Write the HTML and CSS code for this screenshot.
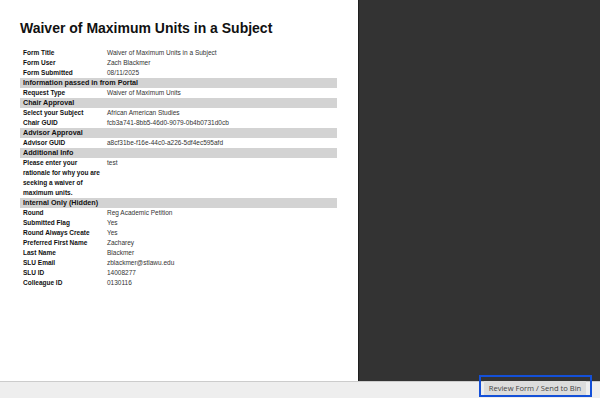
FILE: index.html
```html
<!DOCTYPE html>
<html lang="en">
<head>
  <meta charset="UTF-8" />
  <meta name="viewport" content="width=device-width, initial-scale=1.0"/>
  <title>Waiver of Maximum Units in a Subject</title>
  <link rel="stylesheet" href="styles.css">
</head>
<body>

  <div class="workspace">
    <div class="form-panel">
      <h1>Waiver of Maximum Units in a Subject</h1>

      <table class="form-data">
        <tr><td class="label">Form Title</td><td>Waiver of Maximum Units in a Subject</td></tr>
        <tr><td class="label">Form User</td><td>Zach Blackmer</td></tr>
        <tr><td class="label">Form Submitted</td><td>08/11/2025</td></tr>

        <tr class="section"><td colspan="2">Information passed in from Portal</td></tr>
        <tr><td class="label">Request Type</td><td>Waiver of Maximum Units</td></tr>

        <tr class="section"><td colspan="2">Chair Approval</td></tr>
        <tr><td class="label">Select your Subject</td><td>African American Studies</td></tr>
        <tr><td class="label">Chair GUID</td><td>fcb3a741-8bb5-46d0-9079-0b4b0731d0cb</td></tr>

        <tr class="section"><td colspan="2">Advisor Approval</td></tr>
        <tr><td class="label">Advisor GUID</td><td>a8cf31be-f16e-44c0-a226-5df4ec595afd</td></tr>

        <tr class="section"><td colspan="2">Additional Info</td></tr>
        <tr><td class="label">Please enter your rationale for why you are seeking a waiver of maximum units.</td><td>test</td></tr>

        <tr class="section"><td colspan="2">Internal Only (Hidden)</td></tr>
        <tr><td class="label">Round</td><td>Reg Academic Petition</td></tr>
        <tr><td class="label">Submitted Flag</td><td>Yes</td></tr>
        <tr><td class="label">Round Always Create</td><td>Yes</td></tr>
        <tr><td class="label">Preferred First Name</td><td>Zacharey</td></tr>
        <tr><td class="label">Last Name</td><td>Blackmer</td></tr>
        <tr><td class="label">SLU Email</td><td>zblackmer@stlawu.edu</td></tr>
        <tr><td class="label">SLU ID</td><td>14008277</td></tr>
        <tr><td class="label">Colleague ID</td><td>0130116</td></tr>
      </table>
    </div>

    <div class="bin-area"></div>
  </div>

  <div class="action-bar">
    <button class="review-btn">Review Form / Send to Bin</button>
  </div>

</body>
</html>
```

FILE: styles.css
```css
* {
  box-sizing: border-box;
}

html, body {
  height: 100%;
}

body {
  margin: 0;
  padding: 0;
  display: flex;
  flex-direction: column;
  font-family: "Liberation Sans", Arial, sans-serif;
  background: #333;
  overflow: hidden;
}

.workspace {
  flex: 1;
  display: flex;
  min-height: 0;
}

.form-panel {
  width: 359px;
  background: #fff;
  border-right: 1px solid #1f1f1f;
  padding: 20px 20px 0 20px;
}

.form-panel h1 {
  margin: 0 0 12px 0;
  font-size: 14px;
  font-weight: bold;
  color: #111;
  line-height: 16px;
}

.bin-area {
  flex: 1;
  background: #333;
}

/* Form data table */
.form-data {
  width: 317px;
  border-collapse: collapse;
  font-size: 6.5px;
  line-height: 10px;
  color: #333;
}

.form-data td {
  padding: 0 3px;
  vertical-align: top;
}

.form-data td.label {
  width: 84px;
  padding-right: 2px;
  font-weight: bold;
  color: #111;
}

.form-data tr.section td {
  background: #d3d3d3;
  font-size: 7.2px;
  font-weight: bold;
  color: #111;
  height: 10px;
}

/* Bottom bar */
.action-bar {
  height: 17px;
  flex-shrink: 0;
  background: #eee;
  border-top: 1px solid #ccc;
  display: flex;
  justify-content: flex-end;
  align-items: flex-end;
  padding: 0 14px 2px 0;
}

.review-btn {
  position: relative;
  height: 15px;
  width: 102px;
  padding: 0;
  border: none;
  background: #dcdcdc;
  color: #444;
  font-family: "Open Sans", "Noto Sans", sans-serif;
  font-size: 7.6px;
  line-height: 15px;
  cursor: pointer;
}

.review-btn::after {
  content: "";
  position: absolute;
  top: -6px;
  left: -5px;
  right: -6px;
  bottom: -1px;
  border: 2px solid #1450d8;
  pointer-events: none;
}
```
